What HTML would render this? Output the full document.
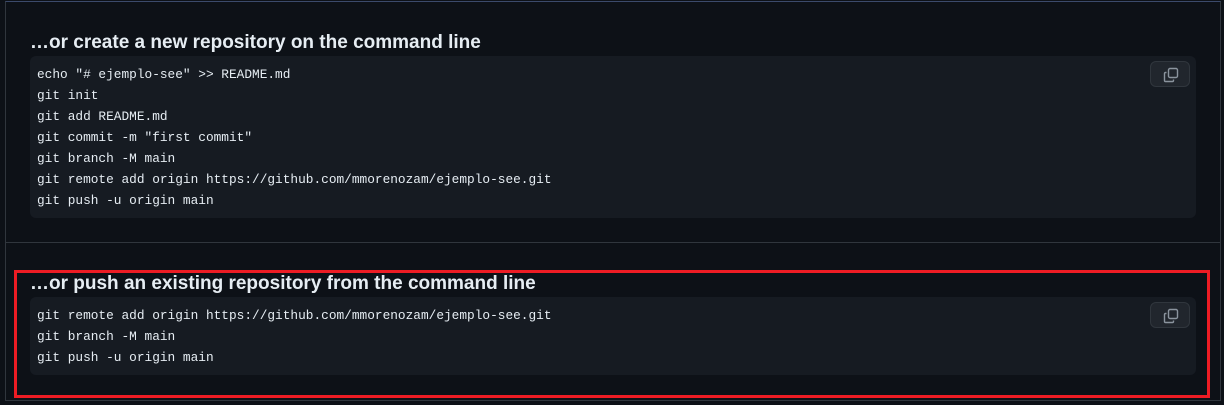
<!DOCTYPE html>
<html><head><style>
body{margin:0;width:1224px;height:405px;background:#0d1117;position:relative;overflow:hidden;font-family:"Liberation Sans",sans-serif;}
.frame{position:absolute;left:5px;top:1px;width:1214px;height:398px;border:1px solid #30363d;border-top-color:#3b4a6b;}
.div{position:absolute;left:5px;top:242px;width:1215px;height:1px;background:#30363d;}
h3{position:absolute;left:30px;margin:0;color:#e6edf3;font-size:19px;font-weight:bold;white-space:nowrap;}
.code{position:absolute;left:30px;width:1166px;background:#161b22;border-radius:6px;}
pre{margin:0;padding:8px 0 0 7px;font-family:"Liberation Mono",monospace;font-size:12.8px;line-height:21px;color:#e6edf3;}
.btn{position:absolute;right:6px;top:5px;width:40px;height:26px;border:1px solid #30363d;border-radius:6px;background:#21262d;box-sizing:border-box;}
.btn svg{position:absolute;left:12px;top:5px;}
.red{position:absolute;left:14px;top:270px;width:1190px;height:122px;border:3px solid #ed1c24;}
</style></head><body>
<div class="frame"></div>
<div class="div"></div>
<h3 style="top:32px">…or create a new repository on the command line</h3>
<div class="code" style="top:56px;height:162px">
<pre>echo "# ejemplo-see" &gt;&gt; README.md
git init
git add README.md
git commit -m "first commit"
git branch -M main
git remote add origin https://github.com/mmorenozam/ejemplo-see.git
git push -u origin main</pre>
<div class="btn"><svg width="16" height="16" viewBox="0 0 16 16" fill="none" stroke="#8b949e" stroke-width="1.4"><rect x="5.5" y="1.5" width="9" height="9" rx="1.5"/><path d="M3.5 5.5h-1a1 1 0 0 0-1 1v7a1 1 0 0 0 1 1h7a1 1 0 0 0 1-1v-1"/></svg></div>
</div>
<h3 style="top:273px">…or push an existing repository from the command line</h3>
<div class="code" style="top:297px;height:78px">
<pre>git remote add origin https://github.com/mmorenozam/ejemplo-see.git
git branch -M main
git push -u origin main</pre>
<div class="btn"><svg width="16" height="16" viewBox="0 0 16 16" fill="none" stroke="#8b949e" stroke-width="1.4"><rect x="5.5" y="1.5" width="9" height="9" rx="1.5"/><path d="M3.5 5.5h-1a1 1 0 0 0-1 1v7a1 1 0 0 0 1 1h7a1 1 0 0 0 1-1v-1"/></svg></div>
</div>
<div class="red"></div>
</body></html>
